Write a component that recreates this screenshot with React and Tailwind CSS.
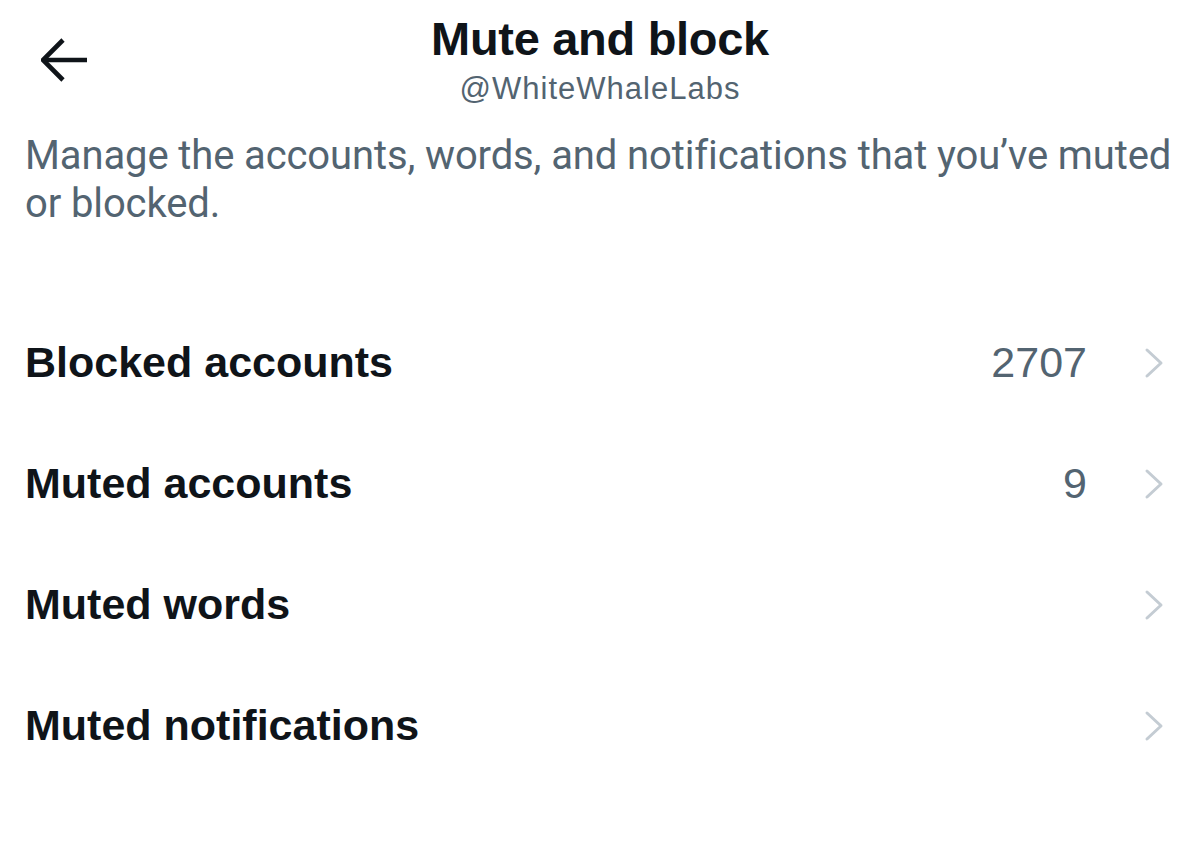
const rows = [
  { label: 'Blocked accounts', count: '2707' },
  { label: 'Muted accounts', count: '9' },
  { label: 'Muted words', count: '' },
  { label: 'Muted notifications', count: '' },
];

function BackArrow() {
  return (
    <svg width="48" height="44" viewBox="0 0 48 44" fill="none" stroke="#0f1419" strokeWidth="4.6" strokeLinejoin="miter">
      <polyline points="22,2 2,22 22,42" />
      <line x1="3" y1="22" x2="46" y2="22" />
    </svg>
  );
}

function Chevron() {
  return (
    <svg width="22" height="32" viewBox="0 0 22 32" fill="none" stroke="#c4ccd3" strokeWidth="3" strokeLinecap="round" strokeLinejoin="round">
      <polyline points="4,3 18,16 4,29" />
    </svg>
  );
}

export default function App() {
  return (
    <div className="w-[1200px] h-[841px] bg-white overflow-hidden font-['Liberation_Sans',Arial,sans-serif]">
      {/* Header */}
      <div className="grid grid-cols-[1fr_auto_1fr] pt-[12px]">
        <div className="pl-[41px] pt-[26px]">
          <BackArrow />
        </div>
        <div className="flex flex-col items-center">
          <h1 className="text-[47px] leading-[54px] font-bold text-[#0f1419] tracking-[-0.3px]">
            Mute and block
          </h1>
          <p className="mt-[6px] text-[31px] leading-[34px] text-[#536471] tracking-[1px]">@WhiteWhaleLabs</p>
        </div>
        <div />
      </div>

      {/* Description */}
      <p className="mt-[26px] pl-[25px] pr-[20px] text-[40px] leading-[48px] text-[#536471] font-['Roboto',sans-serif] tracking-[-0.12px]">
        Manage the accounts, words, and notifications that you’ve muted or blocked.
      </p>

      {/* Rows */}
      <div className="mt-[74px] flex flex-col">
        {rows.map(row => (
          <div key={row.label} className="h-[121px] flex items-center justify-between pl-[25px] pr-[35px]">
            <span className="text-[43px] font-bold text-[#0f1419]">{row.label}</span>
            <div className="flex items-center gap-[56px]">
              {row.count && <span className="text-[43px] text-[#536471]">{row.count}</span>}
              <Chevron />
            </div>
          </div>
        ))}
      </div>
    </div>
  );
}
